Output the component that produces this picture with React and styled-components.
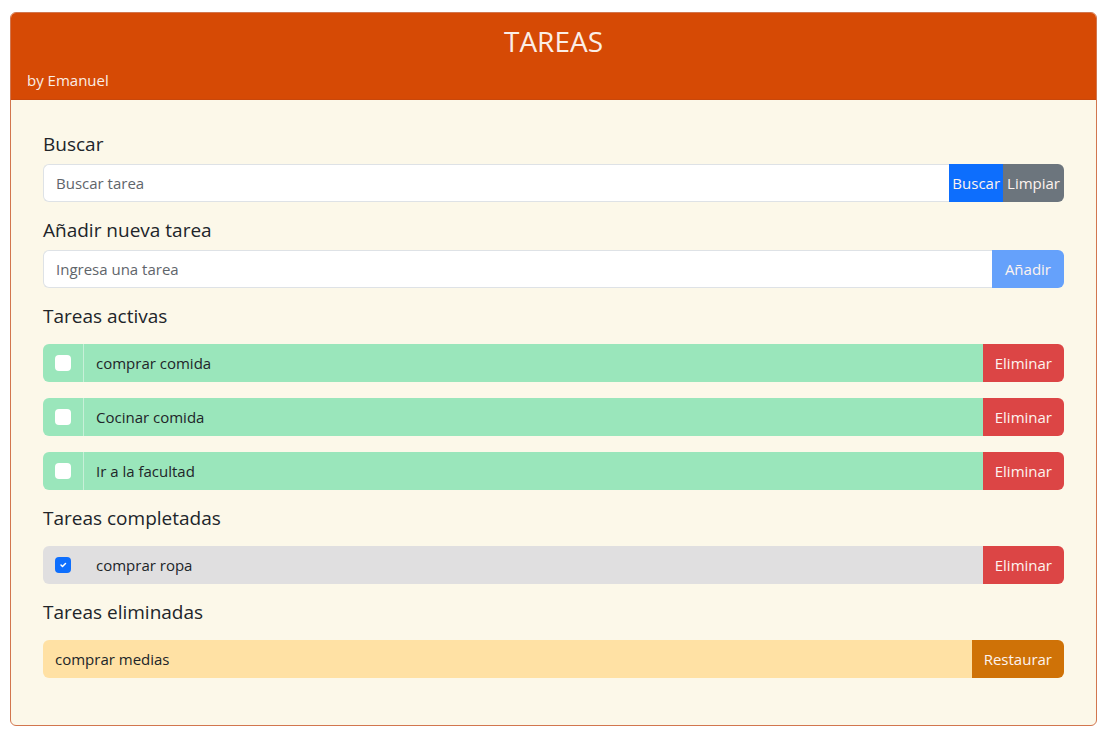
import React, { useState } from "react";
import styled, { createGlobalStyle } from "styled-components";

const GlobalStyle = createGlobalStyle`
  * { box-sizing: border-box; }
  body {
    margin: 0;
    background: #ffffff;
    font-family: "Open Sans", "Noto Sans", sans-serif;
    color: #212529;
  }
`;

export default function App() {
  const [search, setSearch] = useState("");
  const [nueva, setNueva] = useState("");
  const [activas] = useState([
    { id: 1, item: "comprar comida" },
    { id: 2, item: "Cocinar comida" },
    { id: 3, item: "Ir a la facultad" },
  ]);
  const [completadas] = useState([{ id: 4, item: "comprar ropa" }]);
  const [eliminadas] = useState([{ id: 5, item: "comprar medias" }]);

  return (
    <Page>
      <GlobalStyle />
      <Card>
        <Header>
          <Title>TAREAS</Title>
          <Author>by Emanuel</Author>
        </Header>
        <Body>
          <Section>
            <Label>Buscar</Label>
            <Group>
              <Input
                value={search}
                onChange={(e) => setSearch(e.target.value)}
                placeholder="Buscar tarea"
              />
              <Button $bg="#0d6efd" $pad="3px">Buscar</Button>
              <Button $bg="#6c757d" $pad="4px" $last>Limpiar</Button>
            </Group>
          </Section>

          <Section>
            <Label>Añadir nueva tarea</Label>
            <Group>
              <Input
                value={nueva}
                onChange={(e) => setNueva(e.target.value)}
                placeholder="Ingresa una tarea"
              />
              <Button $bg="#65a1fb" $pad="13px" $last>Añadir</Button>
            </Group>
          </Section>

          <Section>
            <Label>Tareas activas</Label>
            <List>
              {activas.map((t) => (
                <Group key={t.id}>
                  <CheckCell $bg="#9ae6bb" $line>
                    <Check />
                  </CheckCell>
                  <ItemText $bg="#9ae6bb">{t.item}</ItemText>
                  <Button $bg="#dc4545" $pad="12px" $last>Eliminar</Button>
                </Group>
              ))}
            </List>
          </Section>

          <Section>
            <Label>Tareas completadas</Label>
            <List>
              {completadas.map((t) => (
                <Group key={t.id}>
                  <CheckCell $bg="#e0dfe0">
                    <Check $checked>
                      <svg width="10" height="10" viewBox="0 0 20 20">
                        <path
                          d="M6 10l3 3 6-6"
                          fill="none"
                          stroke="#fff"
                          strokeWidth="3"
                          strokeLinecap="round"
                          strokeLinejoin="round"
                        />
                      </svg>
                    </Check>
                  </CheckCell>
                  <ItemText $bg="#e0dfe0">{t.item}</ItemText>
                  <Button $bg="#dc4545" $pad="12px" $last>Eliminar</Button>
                </Group>
              ))}
            </List>
          </Section>

          <Section>
            <Label>Tareas eliminadas</Label>
            <List>
              {eliminadas.map((t) => (
                <Group key={t.id}>
                  <ItemText $bg="#ffe1a4" $first>{t.item}</ItemText>
                  <Button $bg="#cf7207" $pad="12px" $last>Restaurar</Button>
                </Group>
              ))}
            </List>
          </Section>
        </Body>
      </Card>
    </Page>
  );
}

const Page = styled.div`
  padding: 12px 13px 7px 10px;
`;

const Card = styled.div`
  border: 1px solid #d2764e;
  border-radius: 6px;
  overflow: hidden;
  background: #fcf8e9;
`;

const Header = styled.div`
  background: #d64a05;
  color: #fff;
  height: 87px;
  padding: 8px 16px 0;
  border-bottom: 1px solid #c9470a;
`;

const Title = styled.h1`
  margin: 0;
  text-align: center;
  font-size: 28px;
  font-weight: 400;
  line-height: 40px;
  color: #fbeee6;
`;

const Author = styled.div`
  font-size: 15px;
  line-height: 20px;
  margin-top: 9px;
  color: #fbeee6;
`;

const Body = styled.div`
  padding: 32px 32px 47px;
  display: flex;
  flex-direction: column;
  gap: 16px;
`;

const Section = styled.div`
  display: flex;
  flex-direction: column;
`;

const Label = styled.h5`
  margin: 0 0 8px;
  font-size: 19px;
  font-weight: 400;
  line-height: 24px;
  color: #212529;
`;

const List = styled.div`
  display: flex;
  flex-direction: column;
  gap: 16px;
  margin-top: 8px;
`;

const Group = styled.div`
  display: flex;
  height: 38px;
`;

const Input = styled.input`
  flex: 1;
  min-width: 0;
  border: 1px solid #dee2e6;
  border-right: none;
  border-radius: 6px 0 0 6px;
  background: #fff;
  padding: 0 12px;
  font-family: inherit;
  font-size: 15px;
  color: #212529;
  outline: none;
  &::placeholder { color: #5f656b; }
`;

const Button = styled.button`
  border: none;
  background: ${(p) => p.$bg};
  color: #fdf3ef;
  padding: 0 ${(p) => p.$pad};
  font-family: inherit;
  font-size: 15px;
  cursor: pointer;
  border-radius: ${(p) => (p.$last ? "0 6px 6px 0" : "0")};
`;

const CheckCell = styled.div`
  width: 41px;
  display: flex;
  align-items: center;
  justify-content: center;
  background: ${(p) => p.$bg};
  border-radius: 6px 0 0 6px;
  border-right: 1px solid ${(p) => (p.$line ? "#c7f0d8" : "transparent")};
`;

const Check = styled.span`
  width: 16px;
  height: 16px;
  border-radius: 4px;
  background: ${(p) => (p.$checked ? "#0d6efd" : "#fff")};
  display: flex;
  align-items: center;
  justify-content: center;
`;

const ItemText = styled.div`
  flex: 1;
  display: flex;
  align-items: center;
  padding: 0 12px;
  background: ${(p) => p.$bg};
  font-size: 15px;
  color: #212529;
  border-radius: ${(p) => (p.$first ? "6px 0 0 6px" : "0")};
`;
